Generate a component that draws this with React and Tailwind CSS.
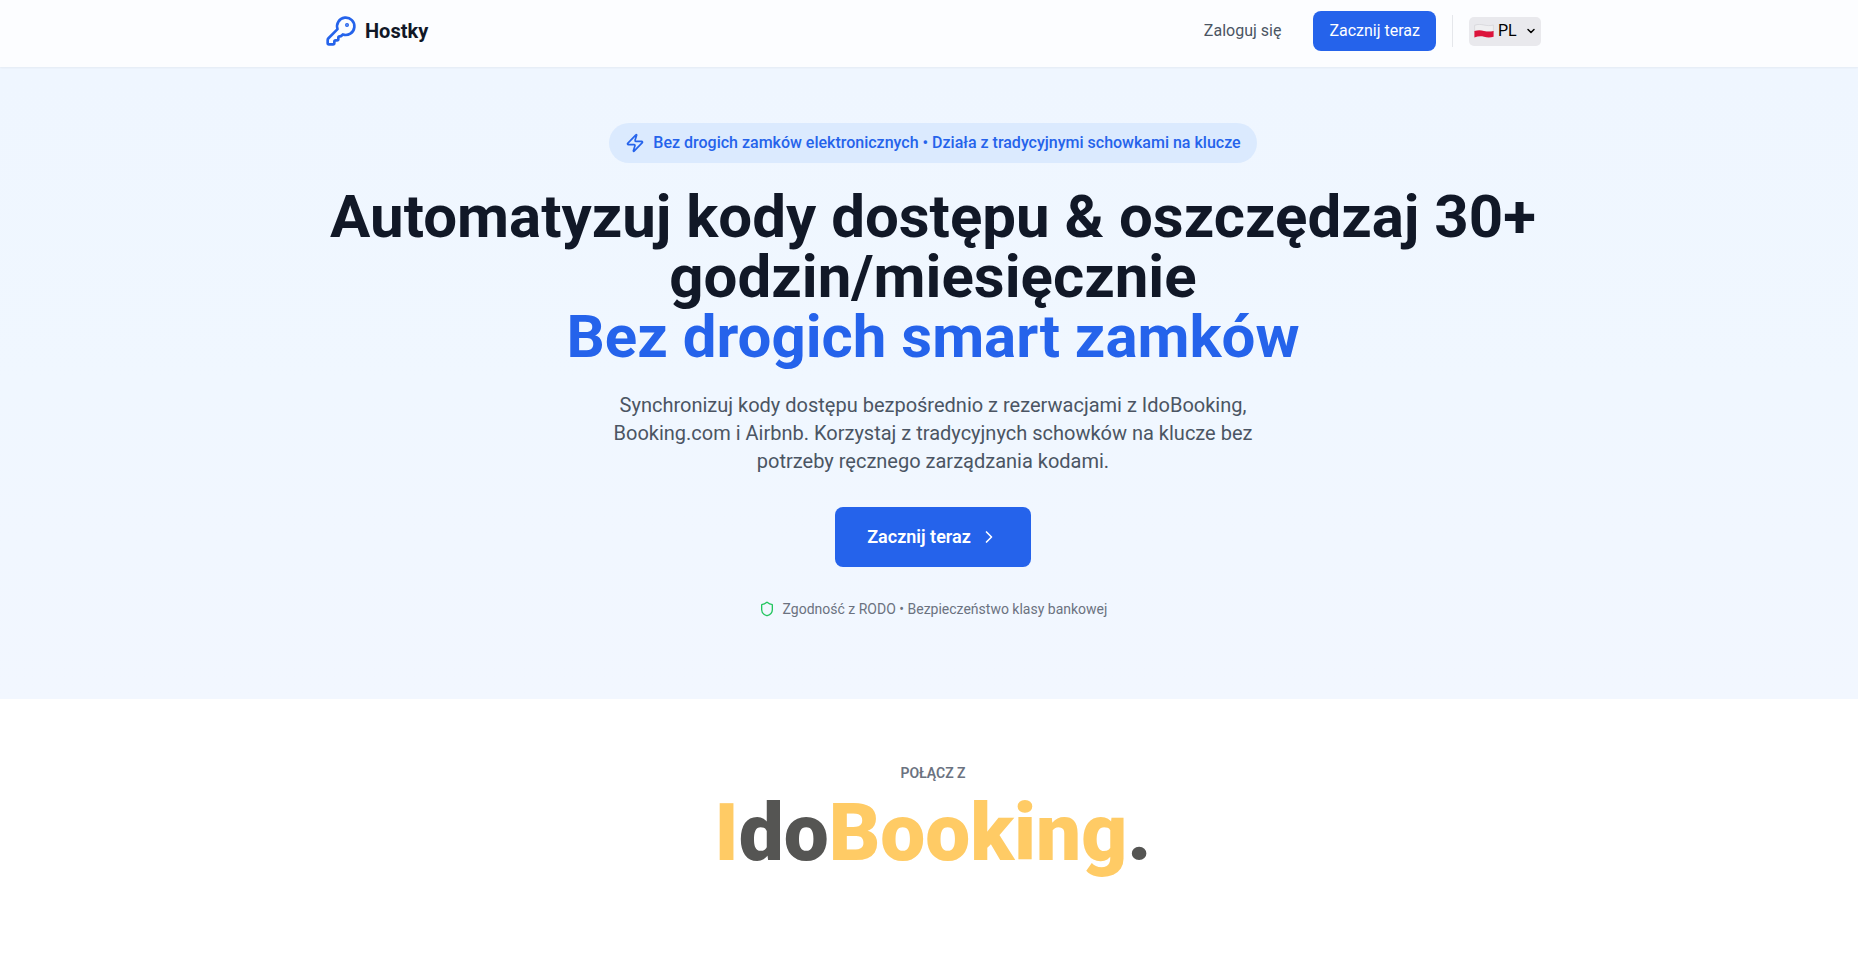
import React, { useState } from 'react'
import { KeyRound, Zap, ChevronRight, ChevronDown, Shield } from 'lucide-react'

const LANGUAGES = [
  { code: 'pl', label: 'PL' },
  { code: 'en', label: 'EN' },
]

const FlagPL = ({ className }) => (
  <svg viewBox="0 0 20 14" className={className} aria-hidden="true">
    <path d="M.6 1.300C4 0 7 .3 10 1s6 .9 9.400 0v6.500H.6z" fill="#efeff1" stroke="#cfcfd4" strokeWidth="0.6" />
    <path d="M.4 7C4 6 7 6.200 10 6.900s6 .9 9.600 0v5.800c-3.400 1-6.600.8-9.600.1s-6-.6-9.600.6z" fill="#dc143c" />
  </svg>
)

function LanguageSelect() {
  const [lang, setLang] = useState('pl')

  return (
    <div className="relative flex items-center">
      <label htmlFor="language" className="sr-only">Język</label>
      <select
        id="language"
        value={lang}
        onChange={(e) => setLang(e.target.value)}
        className="h-[29px] w-[72px] appearance-none rounded-[5px] bg-[#e9e9ed] pl-[29px] text-base leading-6 text-black"
      >
        {LANGUAGES.map((l) => (
          <option key={l.code} value={l.code}>{l.label}</option>
        ))}
      </select>
      <FlagPL className="pointer-events-none absolute left-[5px] h-[14px] w-5" />
      <ChevronDown className="pointer-events-none absolute right-1 size-3 text-black" strokeWidth={3} />
    </div>
  )
}

function Header() {
  return (
    <header className="relative bg-[#fcfdff] pl-2 shadow-[0_1px_2px_0_rgba(0,0,0,0.05)]">
      <div className="mx-auto flex max-w-7xl items-center justify-between px-8 pt-[11px] pb-4">
        <a href="#" className="flex items-center gap-2">
          <KeyRound className="size-8 text-[#2563eb]" />
          <span className="text-xl font-bold text-[#111827]">Hostky</span>
        </a>
        <nav className="flex items-center gap-4">
          <a href="#login" className="px-4 py-2 text-[#4b5563]">Zaloguj się</a>
          <button type="button" className="rounded-lg bg-[#2563eb] px-4 py-2 text-white">Zacznij teraz</button>
          <div className="flex h-8 items-center border-l border-[#e5e7eb] pl-4">
            <LanguageSelect />
          </div>
        </nav>
      </div>
    </header>
  )
}

function Hero() {
  return (
    <section className="bg-linear-to-b from-[#eff6ff] via-[#f0f7ff] to-[#f2f7ff] pt-14 pb-20 pl-2">
      <div className="mx-auto flex max-w-7xl flex-col items-center px-8 text-center">
        <div className="mb-6 flex items-center gap-2 rounded-full bg-[#dbeafe] px-4 py-2 font-medium text-[#2563eb]">
          <Zap className="size-5" />
          <span>Bez drogich zamków elektronicznych • Działa z tradycyjnymi schowkami na klucze</span>
        </div>

        <h1 className="mb-6 text-6xl leading-none font-bold text-[#111827]">
          Automatyzuj kody dostępu &amp; oszczędzaj 30+ godzin/miesięcznie
          <span className="block text-[#2563eb]">Bez drogich smart zamków</span>
        </h1>

        <p className="mb-8 max-w-2xl text-xl leading-7 text-[#4b5563]">
          Synchronizuj kody dostępu bezpośrednio z rezerwacjami z IdoBooking, Booking.com i Airbnb.
          Korzystaj z tradycyjnych schowków na klucze bez potrzeby ręcznego zarządzania kodami.
        </p>

        <button
          type="button"
          className="flex items-center gap-2 rounded-lg bg-[#2563eb] px-8 py-4 text-lg leading-7 font-semibold text-white"
        >
          Zacznij teraz
          <ChevronRight className="size-5" />
        </button>

        <div className="mt-8 flex items-center gap-2 text-sm text-[#6b7280]">
          <Shield className="size-4 text-[#22c55e]" />
          <span>Zgodność z RODO • Bezpieczeństwo klasy bankowej</span>
        </div>
      </div>
    </section>
  )
}

function Integrations() {
  return (
    <section className="bg-white pt-16 pb-12 pl-2">
      <div className="mx-auto flex max-w-7xl flex-col items-center px-8">
        <h2 className="text-sm font-semibold text-[#6b7280] uppercase">Połącz z</h2>
        <a href="#idobooking" className="mt-1 text-[80px] leading-[92px] font-black text-[#ffcb65]">
          I<span className="text-[#555553]">do</span>Booking<span className="text-[#555553]">.</span>
        </a>
      </div>
    </section>
  )
}

export default function App() {
  return (
    <div className="min-h-screen bg-white font-[Roboto,sans-serif]">
      <Header />
      <main>
        <Hero />
        <Integrations />
      </main>
    </div>
  )
}
